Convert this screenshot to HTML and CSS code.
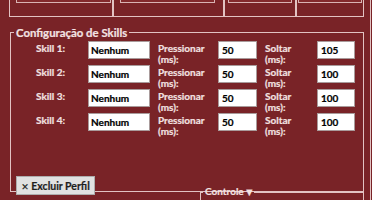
FILE: index.html
```html
<!DOCTYPE html>
<html lang="pt">
<head>
  <meta charset="UTF-8" />
  <title>Configuração de Skills</title>
  <link rel="stylesheet" href="styles.css">
</head>
<body>

<div class="app">
  <div class="main">

    <!-- Reihe oben (abgeschnitten) -->
    <div class="topbar">
      <div class="tbox b1"><div class="tctl"></div></div>
      <div class="tbox b2"><div class="tctl"></div></div>
      <div class="tbox b3"><div class="tctl"></div></div>
      <div class="tbox b4"><div class="tctl"></div></div>
    </div>

    <fieldset class="group skills">
      <legend>Configuração de Skills</legend>
      <div class="skill-grid">
        <label>Skill 1:</label>
        <input class="field combo" value="Nenhum">
        <label>Pressionar<br>(ms):</label>
        <input class="field press" value="50">
        <label>Soltar<br>(ms):</label>
        <input class="field release" value="105">

        <label>Skill 2:</label>
        <input class="field combo" value="Nenhum">
        <label>Pressionar<br>(ms):</label>
        <input class="field press" value="50">
        <label>Soltar<br>(ms):</label>
        <input class="field release" value="100">

        <label>Skill 3:</label>
        <input class="field combo" value="Nenhum">
        <label>Pressionar<br>(ms):</label>
        <input class="field press" value="50">
        <label>Soltar<br>(ms):</label>
        <input class="field release" value="100">

        <label>Skill 4:</label>
        <input class="field combo" value="Nenhum">
        <label>Pressionar<br>(ms):</label>
        <input class="field press" value="50">
        <label>Soltar<br>(ms):</label>
        <input class="field release" value="100">
      </div>
      <button class="btn btn-delete"><span class="x">✕</span> Excluir Perfil</button>
    </fieldset>

    <fieldset class="group controle">
      <legend>Controle <span class="arrow">▼</span></legend>
      <div class="ctl-buttons">
        <button class="btn ctl-a"></button>
        <button class="btn ctl-b"></button>
      </div>
    </fieldset>

  </div>
  <div class="side"></div>
</div>

</body>
</html>
```

FILE: styles.css
```css
* {
  box-sizing: border-box;
}
html, body {
  margin: 0;
  height: 200px;
  overflow: hidden;
}
body {
  background: #792327;
  color: #f3e2e2;
  font-family: Lato, "Open Sans", Arial, sans-serif;
  font-size: 10px;
  font-weight: bold;
  -webkit-text-stroke: 0.2px currentColor;
}

.app {
  display: flex;
  height: 200px;
}
.main {
  flex: 0 0 370px;
}
.side {
  flex: 1;
  border-left: 1px solid #e2c2c2;
}

/* obere Reihe */
.topbar {
  display: flex;
  height: 17px;
  padding-left: 9px;
}
.tbox {
  height: 17px;
  border: 1px solid #e2c2c2;
  border-top: none;
}
.b1 { width: 104px; }
.b2 { width: 111px; }
.b3 { width: 72px; }
.b4 { width: 68px; }
.tctl {
  height: 3px;
  border: 1px solid #d9b3b3;
  border-top: none;
  background: #82292c;
}
.b1 .tctl { margin: 0 1px 0 6px; }
.b2 .tctl { margin: 0 8px 0 6px; }
.b3 .tctl { margin: 0 3px 0 3px; }
.b4 .tctl { margin: 0 1px 0 1px; }

/* Gruppen */
.group {
  margin: 0;
  min-width: 0;
  border: 1px solid #e2c2c2;
}
.group legend {
  padding: 0 2px;
  line-height: 13px;
  font-size: 10px;
  color: #f3e2e2;
}
.skills legend {
  font-size: 11.4px;
}
.controle .arrow {
  font-family: "DejaVu Sans", sans-serif;
  font-size: 8px;
}

.skills {
  width: 354px;
  margin: 9px 0 0 10px;
  padding: 2px 0 0 3px;
  display: flex;
  flex-direction: column;
}

.skill-grid {
  display: grid;
  grid-template-columns: 52px 62px 8px 60px 39px 8px 52px 38px;
  grid-auto-rows: 24px;
  margin-left: 22px;
  line-height: 11px;
}
.skill-grid label {
  padding-top: 2px;
}
.skill-grid .combo { grid-column: 2; }
.skill-grid label:nth-of-type(3n+2) { grid-column: 4; }
.skill-grid .press { grid-column: 5; }
.skill-grid label:nth-of-type(3n) { grid-column: 7; }
.skill-grid .release { grid-column: 8; }

.field {
  height: 18px;
  width: 100%;
  margin: 0;
  padding: 0 0 0 3px;
  border: 1px solid #a99b9b;
  background: #fff;
  color: #000;
  font-family: Lato, "Open Sans", Arial, sans-serif;
  font-size: 10px;
  font-weight: bold;
  -webkit-text-stroke: 0.2px #000;
  outline: none;
}
.combo {
  padding-left: 2px;
}

.btn {
  margin: 0;
  padding: 0;
  background: #e1e1e1;
  border: 1px solid #adadad;
  color: #1e1e1e;
  font-family: Lato, "Open Sans", Arial, sans-serif;
  font-size: 10.5px;
  font-weight: bold;
  -webkit-text-stroke: 0.2px #1e1e1e;
}
.btn-delete {
  align-self: flex-start;
  width: 79px;
  height: 19px;
  margin: 39px 0 -4px 2px;
}
.btn-delete .x {
  font-family: "DejaVu Sans", sans-serif;
  font-size: 9px;
}

.controle {
  width: 164px;
  margin: -7px 0 0 200px;
  padding: 1px 0 0 2px;
}
.ctl-buttons {
  display: flex;
  gap: 8px;
  padding-left: 4px;
}
.ctl-a { width: 71px; height: 8px; }
.ctl-b { width: 72px; height: 8px; }
```
